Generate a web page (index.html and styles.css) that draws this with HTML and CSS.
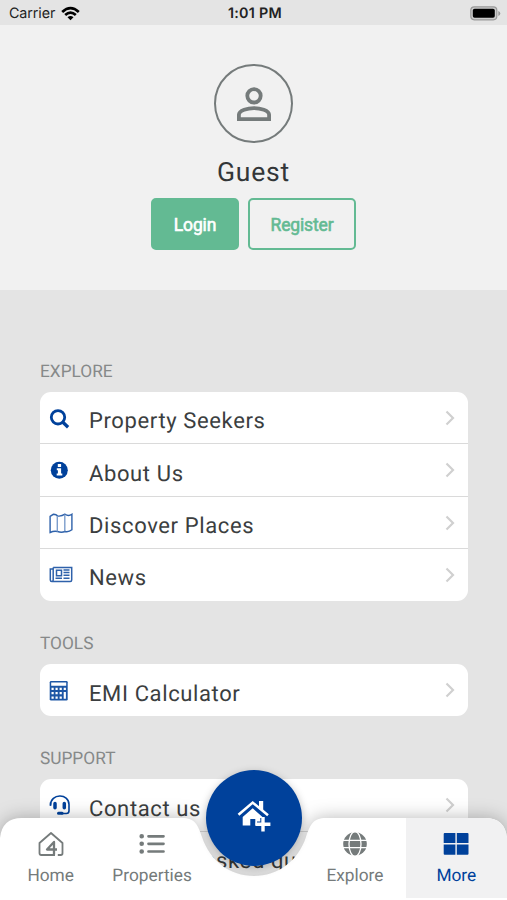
FILE: index.html
```html
<!DOCTYPE html>
<html lang="en">
<head>
<meta charset="utf-8">
<title>More</title>
<link rel="stylesheet" href="styles.css">
</head>
<body>
<div class="screen">
  <header class="status">
    <div class="carrier">Carrier
      <svg width="19" height="15" viewBox="0 0 19 15" fill="none" stroke="#000" stroke-width="2.7"><path d="M1.2 5.9Q9.5-1.8 17.8 5.9"/><path d="M4.2 9Q9.5 4.2 14.8 9"/><path d="M9.5 14.2L6.5 11.2Q9.5 8.8 12.5 11.2Z" fill="#000" stroke="none"/></svg>
    </div>
    <div class="time">1:01 PM</div>
    <svg class="battery" width="31" height="15" viewBox="0 0 31 15"><rect x=".8" y=".8" width="26" height="13" rx="3.5" fill="#ccc" stroke="#999" stroke-width="1.2"/><rect x="2.8" y="2.8" width="22" height="9" rx="1.8"/><path d="M28.3 5v5q2-.8 2-2.5t-2-2.5Z" fill="#999"/></svg>
  </header>
  <section class="profile">
    <div class="avatar"><svg width="36" height="36" viewBox="0 0 36 36" fill="none" stroke="#757b7b" stroke-width="3.8"><circle cx="18" cy="9.8" r="6.7"/><path d="M2.9 33.1v-4.3c0-4.6 9-6.7 15.1-6.7s15.1 2.1 15.1 6.7v4.3Z"/></svg></div>
    <h1 class="name">Guest</h1>
    <div class="actions"><button class="btn btn-login">Login</button><button class="btn btn-register">Register</button></div>
  </section>
  <main class="menu">
    <section class="group">
      <h2 class="heading">EXPLORE</h2>
      <ul class="card">
        <li class="row"><svg class="icon" viewBox="0 0 24 24" fill="none" stroke="#00419b" stroke-width="2.8"><circle cx="9" cy="9.300" r="6.700"/><path d="M13.600 14l5.500 5.200" stroke-width="3.3"/></svg><span class="label">Property Seekers</span><svg class="chevron" viewBox="0 0 10 16"><path d="M1.5 1.5L8 8l-6.500 6.500"/></svg></li>
        <li class="row"><svg class="icon" viewBox="0 0 24 24"><circle cx="10.300" cy="10.300" r="8.500" fill="#00419b"/><path d="M8.800 4.100h3.300v3H8.800zM7.800 8.300h4.300v5.200h1.200v2H7.700v-2h1.200v-3.200H7.800z" fill="#fff"/></svg><span class="label">About Us</span><svg class="chevron" viewBox="0 0 10 16"><path d="M1.5 1.5L8 8l-6.500 6.500"/></svg></li>
        <li class="row"><svg class="icon" viewBox="0 0 24 24" fill="none" stroke="#2e61aa" stroke-width="1.400"><path d="M1.100 3.300L4.300 1.300Q8 1.800 8.500 3q4 .6 7.500-1.800 3.500 2.500 6.900 0v15.600q-3.400 2.700-6.900 1.700-3.500 1.500-7.500 0-3.500-.9-7.400 1Z"/><path d="M8.300 3v15.500M15.800 1.500v16.800" stroke="#7c9dcc"/></svg><span class="label">Discover Places</span><svg class="chevron" viewBox="0 0 10 16"><path d="M1.5 1.5L8 8l-6.500 6.500"/></svg></li>
        <li class="row"><svg class="icon" viewBox="0 0 24 24" fill="none" stroke="#2e61aa" stroke-width="1.500"><path d="M4.200 2.500h18.500v12.500q0 1.500-1.500 1.500H2.800q-1.500 0-1.500-1.500V4h2.300M4.200 2.500v12.500q0 1.500-1.500 1.500"/><path d="M7.500 5.200h5v5.500h-5zM14.500 5h6M14.500 7.600h6M14.500 10.200h6M6.500 13.300h6.500M14.500 13.300h6"/></svg><span class="label">News</span><svg class="chevron" viewBox="0 0 10 16"><path d="M1.5 1.5L8 8l-6.500 6.500"/></svg></li>
      </ul>
    </section>
    <section class="group">
      <h2 class="heading">TOOLS</h2>
      <ul class="card">
        <li class="row"><svg class="icon" viewBox="0 0 24 24"><g transform="translate(.7 -.5)"><path d="M1.500 1.500h15.300q1.200 0 1.200 1.200v17.100q0 1.200-1.200 1.200H1.500Q0 21 0 19.800V2.700q0-1.200 1.500-1.200Z" fill="#1d56a5"/><path d="M1.500 3h15v3.300h-15zM1.800 8.300H4v2.200H1.800zM5.800 8.300H8v2.200H5.800zM9.900 8.300h2.200v2.200H9.900zM14 8.300h2.200v2.200H14zM1.800 12.500H4v2.200H1.800zM5.800 12.500H8v2.200H5.800zM9.900 12.500h2.200v2.200H9.900zM14 12.500h2.200v6.800H14zM1.800 17H4v2.200H1.800zM5.800 17H8v2.200H5.800zM9.900 17h2.200v2.200H9.900z" fill="#fff"/></g></svg><span class="label">EMI Calculator</span><svg class="chevron" viewBox="0 0 10 16"><path d="M1.5 1.5L8 8l-6.500 6.500"/></svg></li>
      </ul>
    </section>
    <section class="group">
      <h2 class="heading">SUPPORT</h2>
      <ul class="card">
        <li class="row"><svg class="icon" viewBox="0 0 24 24" fill="none" stroke="#00419b"><path d="M1.500 10.500C1.500-2 20-2 20 9.500v6.300q0 2.700-2.700 2.700H12" stroke-width="1.600"/><path d="M1.500 7.300v3.500" stroke-width="1.500"/><path d="M6 8.500v4.200M15.300 8.500v4.200" stroke-width="3.500" stroke-linecap="round"/><path d="M9.500 18.300h3.600" stroke-width="3" stroke-linecap="round"/></svg><span class="label">Contact us</span><svg class="chevron" viewBox="0 0 10 16"><path d="M1.5 1.5L8 8l-6.500 6.500"/></svg></li>
        <li class="row"><span class="icon"></span><span class="label">Frequently asked questions</span></li>
      </ul>
    </section>
  </main>
  <nav class="tabbar">
    <svg class="tabbar-shape" width="507" height="82" viewBox="0 0 507 82"><path d="M0 82V20Q2 0 22 0H182C195 0 198 7 202 19C210 43 230 58 254 58S298 43 306 19C310 7 313 0 326 0H485Q505 0 507 20V82Z" fill="#fff"/><path d="M406 0H485Q505 0 507 20V80H406Z" fill="#f1f1f2"/></svg>
    <div class="tabs">
      <a class="tab"><svg width="26" height="26" viewBox="0 0 26 26" fill="none" stroke="#757b7b" stroke-width="1.800" stroke-linejoin="round"><path d="M17 24H3.200q-1.700 0-1.700-1.700V12L13 2l11.500 10v10.300q0 1.700-1.700 1.700h-3"/><path d="M16 23.500V11L9 18.500h10" stroke-width="2.300"/></svg><span>Home</span></a>
      <a class="tab"><svg width="26" height="26" viewBox="0 0 26 26" stroke="#757b7b" stroke-width="2.700" stroke-linecap="round"><path d="M9.500 5.300h15M9.500 12.800h15M9.500 20.500h15"/><path d="M2.700 5.300h.01M2.700 12.800h.01M2.700 20.500h.01" stroke-width="4.600"/></svg><span>Properties</span></a>
      <a class="tab"></a>
      <a class="tab"><svg width="26" height="26" viewBox="0 0 26 26"><circle cx="13" cy="13" r="11.800" fill="#757b7b"/><g fill="none" stroke="#fff" stroke-width="1.300"><path d="M1 9.300h24M1 16.700h24"/><ellipse cx="13" cy="13" rx="6" ry="12.300"/></g></svg><span>Explore</span></a>
      <a class="tab tab-active"><svg width="26" height="26" viewBox="0 0 26 26" fill="#00419b"><path d="M1.700 2H12.400v10H.7V3Q.7 2 1.700 2ZM13.800 2h10.700q1 0 1 1v9H13.800zM.7 13.400h11.700v10.300H1.700q-1 0-1-1zM13.800 13.400h11.700v9.300q0 1-1 1H13.800z"/></svg><span>More</span></a>
    </div>
  </nav>
  <button class="fab" aria-label="Add property"><svg width="34" height="34" viewBox="0 0 34 34"><path d="M5.700 17L15.700 8.300 25.500 17v8.500h-7.200V19h-5v6.500H5.700Z" fill="#fff"/><path d="M1.500 14.700L15.700 2.600 31 15.200" fill="none" stroke="#fff" stroke-width="2.600"/><path d="M22 .9h4.200v10L22 7.200Z" fill="#fff"/><path d="M26 18v13M20 24.200h12" stroke="#00419b" stroke-width="5.400"/><path d="M26 17v14.500M18.600 24.200h14.800" stroke="#fff" stroke-width="3.400"/></svg></button>
</div>
</body>
</html>
```

FILE: styles.css
```css
* { box-sizing: border-box; }
body {
  margin: 0;
  font-family: Roboto, "Liberation Sans", sans-serif;
  text-rendering: geometricPrecision;
}
.screen {
  position: relative;
  width: 507px;
  height: 900px;
  overflow: hidden;
  background: #e4e4e4;
}
svg { display: block; flex: none; }
.status {
  display: grid;
  grid-template-columns: 1fr auto 1fr;
  align-items: center;
  height: 25px;
  padding: 2px 6px 0 9px;
  font-family: Inter, sans-serif;
  font-size: 14.3px;
  color: #222;
}
.carrier { display: flex; align-items: center; gap: 6px; letter-spacing: -0.1px; }
.time { font-weight: 600; letter-spacing: 0.3px; }
.battery { justify-self: end; }
.profile {
  display: flex;
  flex-direction: column;
  align-items: center;
  height: 265px;
  padding-top: 39px;
  background: #f1f1f1;
}
.avatar {
  display: flex;
  align-items: center;
  justify-content: center;
  width: 79px;
  height: 79px;
  border: 2px solid #757b7b;
  border-radius: 50%;
}
.name {
  margin: 14px 0 9px;
  font-size: 26.5px;
  font-weight: 400;
  line-height: 32px;
  letter-spacing: 0.8px;
  color: #333638;
}
.actions { display: flex; gap: 9px; }
.btn {
  height: 52px;
  padding: 1px 0 0;
  border: 2px solid #63ba93;
  border-radius: 5px;
  font: 400 17.5px Roboto, sans-serif;
  letter-spacing: -0.15px;
  -webkit-text-stroke: 0.6px currentColor;
}
.btn-login { width: 88px; background: #63ba93; color: #fff; }
.btn-register { width: 108px; background: transparent; color: #63ba93; }
.menu {
  display: flex;
  flex-direction: column;
  gap: 33px;
  padding: 72px 39px 0 40px;
}
.heading {
  margin: 0 0 9px;
  font-size: 17.3px;
  font-weight: 400;
  line-height: 21px;
  color: #868989;
}
.card {
  margin: 0;
  padding: 0;
  list-style: none;
  border-radius: 11px;
  background: #fff;
}
.row { display: flex; height: 52.3px; padding: 0 13px 0 9px; }
.row + .row { box-shadow: 0 -1px 0 #dadada; }
.icon { width: 24px; height: 24px; margin-top: 16px; }
.label {
  flex: 1;
  margin: 16.4px 0 0 16px;
  font-size: 22px;
  line-height: 28px;
  letter-spacing: 0.62px;
  white-space: nowrap;
  color: #3b3e40;
}
.chevron {
  width: 10px;
  height: 16px;
  margin-top: 18px;
  fill: none;
  stroke: #d0d0d0;
  stroke-width: 2.2;
}
.tabbar { position: absolute; left: 0; bottom: 0; width: 507px; height: 82px; }
.tabbar-shape {
  position: absolute;
  inset: 0;
  overflow: visible;
  filter: drop-shadow(0 0 9px rgba(0, 0, 0, 0.28));
}
.tabs {
  position: relative;
  display: grid;
  grid-template-columns: repeat(5, 1fr);
  height: 100%;
}
.tab {
  display: flex;
  flex-direction: column;
  align-items: center;
  gap: 9px;
  padding-top: 13px;
  font-size: 17.3px;
  line-height: 21px;
  color: #757b7b;
}
.tab-active { color: #00419b; }
.fab {
  position: absolute;
  left: 206px;
  top: 770px;
  display: flex;
  justify-content: center;
  align-items: center;
  width: 96px;
  height: 96px;
  padding: 0 0 2px;
  border: 0;
  border-radius: 50%;
  background: #00419b;
  box-shadow: 0 3px 9px rgba(0, 0, 0, 0.3);
}
```
